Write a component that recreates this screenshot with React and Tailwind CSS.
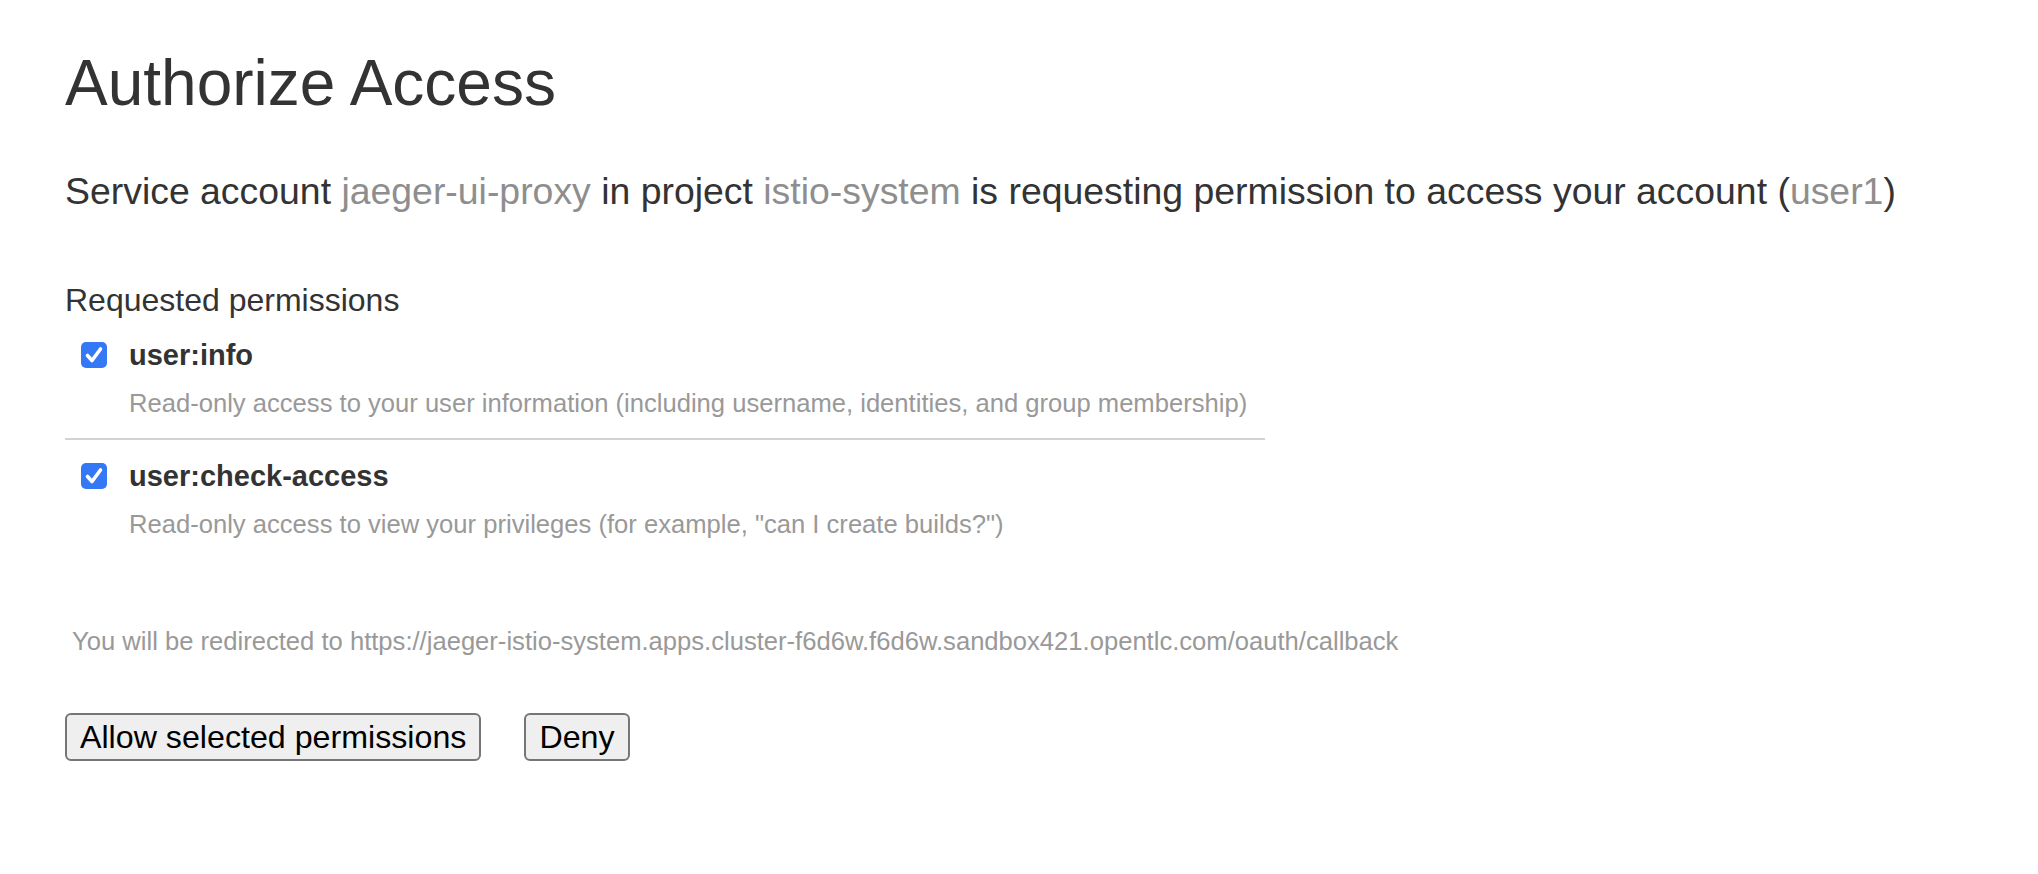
import React, { useState } from "react";

const permisos = [
    {
        id: "user:info",
        descripcion:
            "Read-only access to your user information (including username, identities, and group membership)",
    },
    {
        id: "user:check-access",
        descripcion: 'Read-only access to view your privileges (for example, "can I create builds?")',
    },
];

function Casilla({ marcado, onClick }) {
    return (
        <button
            type="button"
            onClick={onClick}
            className={`mt-[3px] w-[26px] h-[26px] rounded-[5px] flex items-center justify-center shrink-0 ${
                marcado ? "bg-[#3478f6]" : "bg-white border-2 border-[#767676]"
            }`}
        >
            {marcado && (
                <svg width="26" height="26" viewBox="0 0 26 26">
                    <path
                        d="M6.5 13.5 L11 18.5 L19.5 7"
                        fill="none"
                        stroke="white"
                        strokeWidth="3.6"
                        strokeLinecap="round"
                        strokeLinejoin="round"
                    />
                </svg>
            )}
        </button>
    );
}

export default function App() {
    const [seleccion, setSeleccion] = useState({ "user:info": true, "user:check-access": true });

    const alternar = (id) => setSeleccion((s) => ({ ...s, [id]: !s[id] }));

    return (
        <div className="min-h-screen bg-white pt-[51px] px-[65px] text-[#333333] font-['Liberation_Sans',Arial,sans-serif]">
            <h1 className="text-[64px] leading-[64px] font-normal">Authorize Access</h1>

            <p className="mt-[58px] text-[37.4px] leading-[36px]">
                Service account <span className="text-[#8e8e8e]">jaeger-ui-proxy</span> in project{" "}
                <span className="text-[#8e8e8e]">istio-system</span> is requesting permission to access your
                account (<span className="text-[#8e8e8e]">user1</span>)
            </p>

            <h3 className="mt-[75px] text-[32px] leading-[32px]">Requested permissions</h3>

            <div className="w-[1200px]">
                {permisos.map((p, i) => (
                    <div key={p.id}>
                        {i > 0 && <div className="mt-[23px] h-[2px] bg-[#d3d3d3]" />}
                        <div className={`flex items-start gap-[22px] pl-[16px] ${i > 0 ? "mt-[20px]" : "mt-[23px]"}`}>
                            <Casilla marcado={seleccion[p.id]} onClick={() => alternar(p.id)} />
                            <div>
                                <div className="text-[29px] leading-[32px] font-bold">{p.id}</div>
                                <div className="mt-[20px] text-[25.6px] leading-[24px] text-[#999999]">
                                    {p.descripcion}
                                </div>
                            </div>
                        </div>
                    </div>
                ))}
            </div>

            <p className="mt-[93px] pl-[7px] text-[25.6px] leading-[24px] text-[#999999]">
                You will be redirected to
                https://jaeger-istio-system.apps.cluster-f6d6w.f6d6w.sandbox421.opentlc.com/oauth/callback
            </p>

            <div className="mt-[60px] flex gap-[43px]">
                <button className="h-[48px] px-[13px] border-2 border-[#767676] rounded-[6px] bg-[#efefef] text-black text-[32.2px] leading-[36px]">
                    Allow selected permissions
                </button>
                <button className="h-[48px] px-[13px] border-2 border-[#767676] rounded-[6px] bg-[#efefef] text-black text-[32.2px] leading-[36px]">
                    Deny
                </button>
            </div>
        </div>
    );
}
